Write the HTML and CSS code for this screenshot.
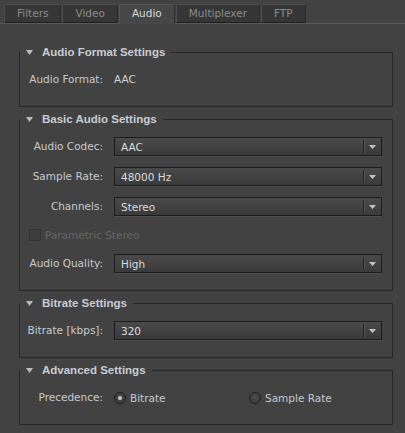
FILE: index.html
```html
<!DOCTYPE html>
<html>
<head>
<meta charset="utf-8">
<link rel="stylesheet" href="styles.css">
</head>
<body>
<div class="tabs">
  <div class="tab">Filters</div>
  <div class="tab">Video</div>
  <div class="tab active">Audio</div>
  <div class="tab">Multiplexer</div>
  <div class="tab">FTP</div>
</div>
<div class="content">
  <fieldset class="group">
    <legend class="group-title"><svg class="caret" width="7" height="5" viewBox="0 0 7 5"><path d="M0 0H7L3.5 5Z"/></svg>Audio Format Settings</legend>
    <div class="form">
      <span class="label">Audio Format:</span><span class="value">AAC</span>
    </div>
  </fieldset>

  <fieldset class="group">
    <legend class="group-title"><svg class="caret" width="7" height="5" viewBox="0 0 7 5"><path d="M0 0H7L3.5 5Z"/></svg>Basic Audio Settings</legend>
    <div class="form">
      <span class="label">Audio Codec:</span>
      <div class="select"><span class="select-text">AAC</span><span class="select-btn"><svg width="7" height="4" viewBox="0 0 7 4"><path d="M0 0H7L3.5 4Z"/></svg></span></div>
      <span class="label">Sample Rate:</span>
      <div class="select"><span class="select-text">48000 Hz</span><span class="select-btn"><svg width="7" height="4" viewBox="0 0 7 4"><path d="M0 0H7L3.5 4Z"/></svg></span></div>
      <span class="label">Channels:</span>
      <div class="select"><span class="select-text">Stereo</span><span class="select-btn"><svg width="7" height="4" viewBox="0 0 7 4"><path d="M0 0H7L3.5 4Z"/></svg></span></div>
      <div class="check-row"><span class="checkbox"></span>Parametric Stereo</div>
      <span class="label">Audio Quality:</span>
      <div class="select"><span class="select-text">High</span><span class="select-btn"><svg width="7" height="4" viewBox="0 0 7 4"><path d="M0 0H7L3.5 4Z"/></svg></span></div>
    </div>
  </fieldset>

  <fieldset class="group">
    <legend class="group-title"><svg class="caret" width="7" height="5" viewBox="0 0 7 5"><path d="M0 0H7L3.5 5Z"/></svg>Bitrate Settings</legend>
    <div class="form">
      <span class="label">Bitrate [kbps]:</span>
      <div class="select"><span class="select-text">320</span><span class="select-btn"><svg width="7" height="4" viewBox="0 0 7 4"><path d="M0 0H7L3.5 4Z"/></svg></span></div>
    </div>
  </fieldset>

  <fieldset class="group">
    <legend class="group-title"><svg class="caret" width="7" height="5" viewBox="0 0 7 5"><path d="M0 0H7L3.5 5Z"/></svg>Advanced Settings</legend>
    <div class="form">
      <span class="label">Precedence:</span>
      <div class="radio-group">
        <div class="radio-opt"><span class="radio on"><span class="dot"></span></span>Bitrate</div>
        <div class="radio-opt"><span class="radio"></span>Sample Rate</div>
      </div>
    </div>
  </fieldset>
</div>
</body>
</html>
```

FILE: styles.css
```css
html, body {
  margin: 0;
  padding: 0;
}
body {
  width: 405px;
  height: 433px;
  overflow: hidden;
  background: #424242;
  font-family: "DejaVu Sans", Verdana, sans-serif;
  font-size: 10.5px;
  color: #c6cad0;
}

.tabs {
  display: flex;
  align-items: flex-start;
  gap: 1px;
  padding: 4px 0 0 4px;
  border-bottom: 1px solid #5a5a5a;
}
.tab {
  height: 19px;
  box-sizing: border-box;
  padding: 0 12px;
  line-height: 17px;
  background: #363636;
  color: #8c8c8c;
  border: 1px solid;
  border-color: #4c4c4c #2a2a2a #1e1e1e #4c4c4c;
  white-space: nowrap;
}
.tab.active {
  height: 20px;
  margin-bottom: -1px;
  background: #474747;
  color: #d6d8dc;
  border-color: #555 #2e2e2e #474747 #555;
}

.content {
  padding: 21px 12px 0 19px;
}

.group {
  margin: 0 0 5px;
  padding: 10px 10px 17px 0;
  border: 1px solid #262626;
  min-width: 0;
}
.group-title {
  padding: 0 6px;
  line-height: 15px;
  font-family: "Liberation Sans", Arial, sans-serif;
  font-size: 11.5px;
  font-weight: bold;
  color: #c8ccd3;
  white-space: nowrap;
}
.caret {
  fill: #bcbcbc;
  margin-right: 9px;
  vertical-align: 1px;
}

.form {
  display: grid;
  grid-template-columns: 83px 268px;
  column-gap: 11px;
  row-gap: 11px;
  align-items: center;
}
.label {
  text-align: right;
  line-height: 19px;
  white-space: nowrap;
}
.value {
  line-height: 19px;
  color: #cfd3d9;
}

.select {
  height: 19px;
  box-sizing: border-box;
  display: flex;
  align-items: center;
  border: 1px solid #1c1c1c;
  background: linear-gradient(#4a4a4a, #3a3a3a);
  box-shadow: 0 1px 0 #4e4e4e;
  color: #dadcdf;
}
.select-text {
  flex: 1;
  padding-left: 6px;
  white-space: nowrap;
}
.select-btn {
  width: 17px;
  align-self: stretch;
  margin: 2px 0;
  border-left: 1px solid #202020;
  box-shadow: inset 1px 0 0 #545454;
  display: flex;
  align-items: center;
  justify-content: center;
}
.select-btn svg {
  fill: #c4c4c4;
}

.check-row {
  grid-column: 1 / -1;
  height: 16px;
  display: flex;
  align-items: center;
  padding-left: 9px;
  color: #676767;
}
.checkbox {
  width: 12px;
  height: 12px;
  box-sizing: border-box;
  border: 1px solid #333;
  background: #3d3d3d;
  margin-right: 4px;
}

.radio-group {
  display: grid;
  grid-template-columns: 135px 1fr;
  align-items: center;
  height: 19px;
}
.radio-opt {
  display: flex;
  align-items: center;
  gap: 4px;
  white-space: nowrap;
}
.radio {
  width: 12px;
  height: 12px;
  box-sizing: border-box;
  border-radius: 50%;
  border: 1px solid #1e1e1e;
  background: radial-gradient(circle at 50% 40%, #4a4a4a, #383838);
  display: flex;
  align-items: center;
  justify-content: center;
}
.dot {
  width: 4px;
  height: 4px;
  border-radius: 50%;
  background: #c8c8c8;
}
```
